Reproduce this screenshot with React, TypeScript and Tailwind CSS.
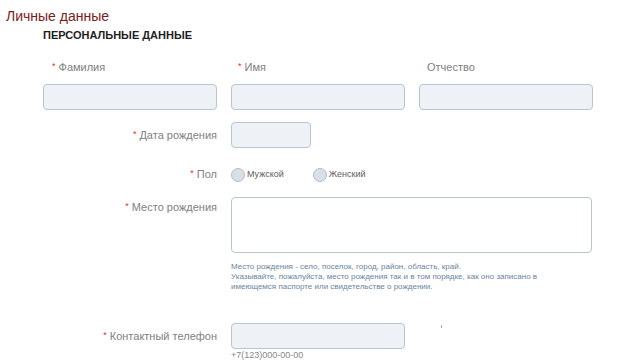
import React from "react";

const Req = () => <span className="text-[#d9342b] text-[9px] mr-[3px] relative -top-[2px]">*</span>;

const inputCls = "h-[26px] rounded-[4px] border border-[#b9c5d2] bg-[#eef1f5]";
const labelCls = "text-[11px] leading-[14px]";

export default function App() {
  return (
    <div className="w-[630px] h-[363px] bg-white overflow-hidden text-[#808080]" style={{ fontFamily: '"Liberation Sans", Arial, sans-serif' }}>
      <div className="pl-[6px] pt-[8px] text-[14px] leading-[17px] text-[#7a1c1c]">Личные данные</div>
      <div className="pl-[43px] pt-[4px] text-[11px] leading-[13px] font-bold text-[#1e1e1e]">ПЕРСОНАЛЬНЫЕ ДАННЫЕ</div>

      <div className="pl-[43px] pt-[18px] flex gap-[14px]">
        <div className="w-[174px]">
          <div className={`pl-[9px] h-[24px] ${labelCls}`}><Req />Фамилия</div>
          <div className={inputCls} />
        </div>
        <div className="w-[174px]">
          <div className={`pl-[7px] h-[24px] ${labelCls}`}><Req />Имя</div>
          <div className={inputCls} />
        </div>
        <div className="w-[174px]">
          <div className={`pl-[8px] h-[24px] ${labelCls}`}>Отчество</div>
          <div className={inputCls} />
        </div>
      </div>

      <div className="pl-[43px] pt-[12px] flex gap-[14px] items-center">
        <div className={`w-[174px] text-right ${labelCls}`}><Req />Дата рождения</div>
        <div className={`${inputCls} w-[80px]`} />
      </div>

      <div className="pl-[43px] pt-[19px] flex gap-[14px] items-center">
        <div className={`w-[174px] text-right ${labelCls}`}><Req />Пол</div>
        <div className="flex items-center text-[9px] text-[#606060]">
          <span className="w-[14px] h-[14px] rounded-full border border-[#b3bdc9] bg-[#d9dfe7]" />
          <span className="ml-[2px]">Мужской</span>
          <span className="ml-[29px] w-[14px] h-[14px] rounded-full border border-[#b3bdc9] bg-[#d9dfe7]" />
          <span className="ml-[2px]">Женский</span>
        </div>
      </div>

      <div className="pl-[43px] pt-[15px] flex gap-[14px]">
        <div className={`w-[174px] pt-[3px] text-right ${labelCls}`}><Req />Место рождения</div>
        <div className="w-[361px]">
          <div className="h-[56px] rounded-[4px] border border-[#b9c5d2] bg-white" />
          <div className="pt-[9px] text-[8px] leading-[10px] text-[#6a84a0]">
            Место рождения - село, поселок, город, район, область, край.<br />
            Указывайте, пожалуйста, место рождения так и в том порядке, как оно записано в<br />
            имеющемся паспорте или свидетельстве о рождении.
          </div>
        </div>
      </div>

      <div className="pl-[43px] pt-[31px] flex gap-[14px]">
        <div className={`w-[174px] pt-[6px] text-right ${labelCls}`}><Req />Контактный телефон</div>
        <div className="flex items-start">
          <div>
            <div className={`${inputCls} w-[174px]`} />
            <div className="pt-[1px] text-[9px] leading-[11px] text-[#888]">+7(123)000-00-00</div>
          </div>
          <span className="ml-[36px] mt-[2px] w-[1px] h-[3px] bg-[#aaa]" />
        </div>
      </div>
    </div>
  );
}
